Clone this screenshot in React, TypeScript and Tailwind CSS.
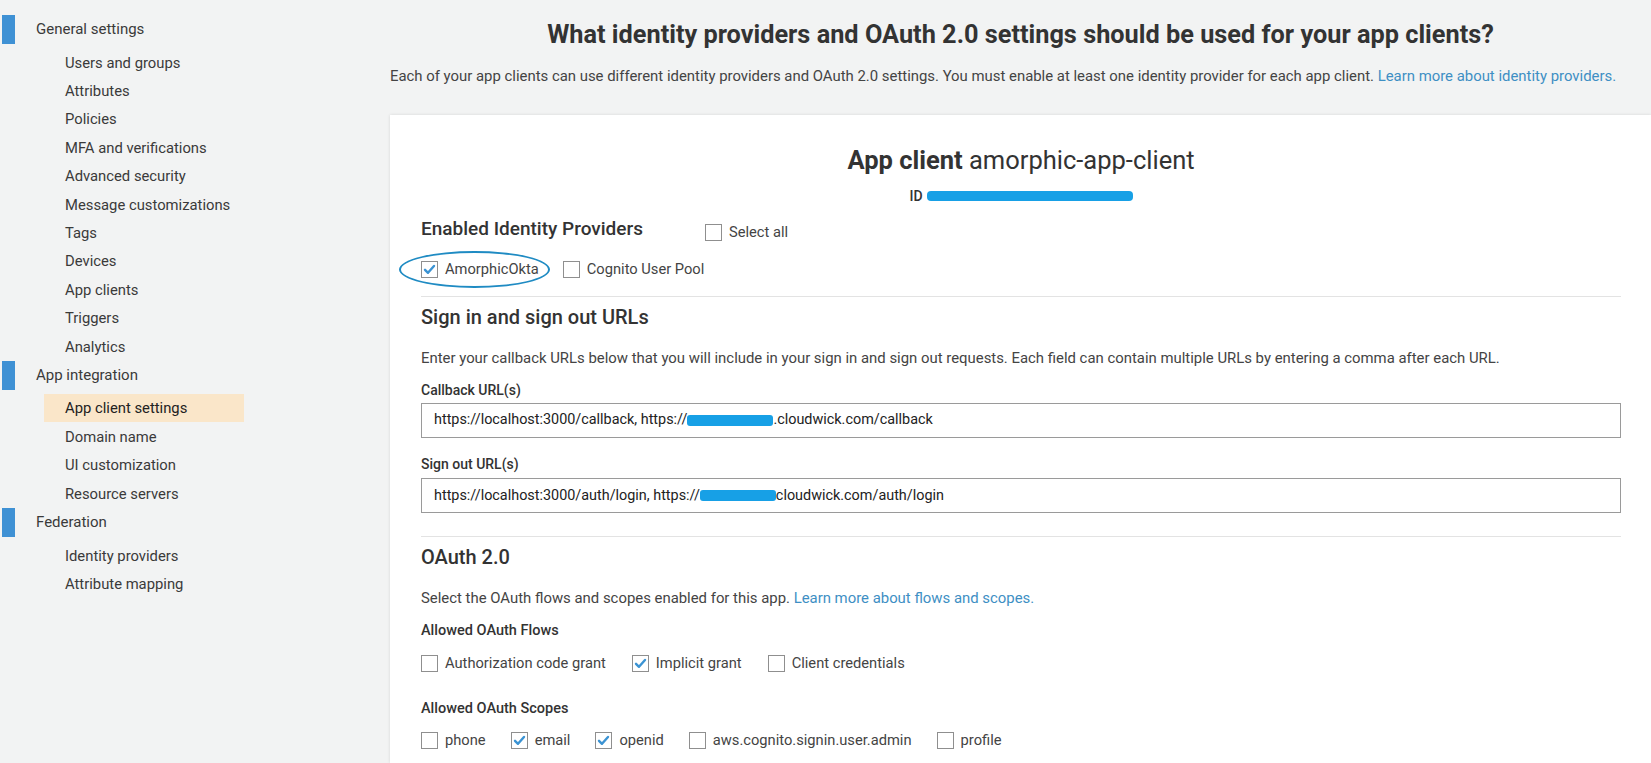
import type { ReactNode } from 'react';

type NavGroup = {
  title: string;
  items: string[];
};

const nav: NavGroup[] = [
  {
    title: 'General settings',
    items: [
      'Users and groups',
      'Attributes',
      'Policies',
      'MFA and verifications',
      'Advanced security',
      'Message customizations',
      'Tags',
      'Devices',
      'App clients',
      'Triggers',
      'Analytics',
    ],
  },
  {
    title: 'App integration',
    items: ['App client settings', 'Domain name', 'UI customization', 'Resource servers'],
  },
  {
    title: 'Federation',
    items: ['Identity providers', 'Attribute mapping'],
  },
];

const Checkbox = ({ checked = false, label }: { checked?: boolean; label: string }) => (
  <label className="flex items-center gap-[7px] h-[24px] text-[14.7px] text-[#444]">
    <span className="w-[17px] h-[17px] border border-[#8f8f8f] bg-white flex items-center justify-center shrink-0">
      {checked && (
        <svg width="13" height="13" viewBox="0 0 13 13" fill="none">
          <path d="M2 6.8 L5 9.8 L11 3" stroke="#3b93d3" strokeWidth="2.4" strokeLinecap="round" strokeLinejoin="round" />
        </svg>
      )}
    </span>
    <span>{label}</span>
  </label>
);

const Redacted = ({ width }: { width: number }) => (
  <span
    className="inline-block h-[11px] bg-[#17a0e6] rounded-[3px] align-middle"
    style={{ width }}
  />
);

const UrlBox = ({ children }: { children: ReactNode }) => (
  <div className="h-[35px] border border-[#9a9a9a] bg-white flex items-center px-[12px] text-[14.4px] text-[#222]">
    {children}
  </div>
);

const Sidebar = () => (
  <aside className="w-[390px] shrink-0 pt-[15px]">
    {nav.map((group) => (
      <div key={group.title}>
        <div className="flex items-center h-[29px] mb-[4.5px]">
          <span className="w-[13px] h-[29px] bg-[#3f91d4] ml-[2px]" />
          <span className="ml-[21px] text-[15px] text-[#3a3a3a]">{group.title}</span>
        </div>
        {group.items.map((item) => (
          <div key={item} className="h-[28.4px] flex items-center">
            <span
              className={
                item === 'App client settings'
                  ? 'ml-[44px] w-[200px] h-[28px] flex items-center pl-[21px] bg-[#fae6c9] text-[#222]'
                  : 'ml-[65px] text-[#3a3a3a]'
              }
            >
              <span className="text-[14.8px]">{item}</span>
            </span>
          </div>
        ))}
      </div>
    ))}
  </aside>
);

export default function App() {
  return (
    <div
      className="flex h-screen bg-[#f2f3f3] overflow-hidden"
      style={{ fontFamily: 'Roboto, "Liberation Sans", sans-serif' }}
    >
      <Sidebar />

      <main className="flex-1 flex flex-col min-w-0">
        <div className="pt-[19px]">
          <h1 className="text-center text-[25.3px] leading-[32px] font-bold text-[#333]">
            What identity providers and OAuth 2.0 settings should be used for your app clients?
          </h1>
          <p className="mt-[15px] text-[14.9px] leading-[20px] text-[#444] whitespace-nowrap">
            Each of your app clients can use different identity providers and OAuth 2.0 settings. You must enable at
            least one identity provider for each app client.{' '}
            <a className="text-[#3e8fc4]">Learn more about identity providers.</a>
          </p>
        </div>

        <section className="mt-[29px] flex-1 bg-white shadow-[0_0_3px_rgba(0,0,0,0.12)] pl-[31px] pr-[30px] pt-[30px]">
          <h2 className="text-center text-[25.5px] leading-[30px] text-[#333]">
            <span className="font-bold">App client</span> amorphic-app-client
          </h2>
          <div className="mt-[11px] h-[20px] flex items-center justify-center text-[14px] text-[#333] font-medium">
            <span className="mr-[4px]">ID</span>
            <span className="relative inline-block w-[206px] h-[10px]">
              <span className="absolute left-[8px] top-[6px] w-[70px] h-[3px] bg-[#555] rounded" />
              <span className="absolute inset-0 bg-[#17a0e6] rounded-[4px]" />
            </span>
          </div>

          <div className="mt-[11.5px] flex items-center h-[24px]">
            <h3 className="w-[284px] text-[19px] font-medium text-[#333]">Enabled Identity Providers</h3>
            <div className="mt-[5px]">
              <Checkbox label="Select all" />
            </div>
          </div>

          <div className="mt-[16px] flex items-center gap-[24px]">
            <div className="relative">
              <Checkbox checked label="AmorphicOkta" />
              <span className="absolute left-[-22px] top-[-7px] w-[151px] h-[37px] rounded-[50%] border-2 border-[#1f8bc3]" />
            </div>
            <Checkbox label="Cognito User Pool" />
          </div>

          <div className="mt-[14.5px] border-t border-[#e3e3e3]" />

          <h3 className="mt-[8px] h-[24px] leading-[24px] text-[20px] font-medium text-[#333]">Sign in and sign out URLs</h3>
          <p className="mt-[18.5px] leading-[20px] text-[14.9px] text-[#444]">
            Enter your callback URLs below that you will include in your sign in and sign out requests. Each field can
            contain multiple URLs by entering a comma after each URL.
          </p>

          <div className="mt-[12px] leading-[20px] text-[14px] font-medium text-[#333]">Callback URL(s)</div>
          <div className="mt-[3px]">
            <UrlBox>
              https://localhost:3000/callback, https://
              <Redacted width={86} />
              .cloudwick.com/callback
            </UrlBox>
          </div>

          <div className="mt-[16.5px] leading-[20px] text-[14px] font-medium text-[#333]">Sign out URL(s)</div>
          <div className="mt-[4px]">
            <UrlBox>
              https://localhost:3000/auth/login, https://
              <Redacted width={76} />
              cloudwick.com/auth/login
            </UrlBox>
          </div>

          <div className="mt-[23px] border-t border-[#e3e3e3]" />

          <h3 className="mt-[8px] h-[24px] leading-[24px] text-[20px] font-medium text-[#333]">OAuth 2.0</h3>
          <p className="mt-[19px] leading-[20px] text-[14.9px] text-[#444]">
            Select the OAuth flows and scopes enabled for this app.{' '}
            <a className="text-[#3e8fc4]">Learn more about flows and scopes.</a>
          </p>

          <div className="mt-[13px] leading-[20px] text-[14.5px] font-medium text-[#333]">Allowed OAuth Flows</div>
          <div className="mt-[10px] flex items-center gap-[26px]">
            <Checkbox label="Authorization code grant" />
            <Checkbox checked label="Implicit grant" />
            <Checkbox label="Client credentials" />
          </div>

          <div className="mt-[23.5px] leading-[20px] text-[14.5px] font-medium text-[#333]">Allowed OAuth Scopes</div>
          <div className="mt-[10px] flex items-center gap-[25px]">
            <Checkbox label="phone" />
            <Checkbox checked label="email" />
            <Checkbox checked label="openid" />
            <Checkbox label="aws.cognito.signin.user.admin" />
            <Checkbox label="profile" />
          </div>
        </section>
      </main>
    </div>
  );
}
